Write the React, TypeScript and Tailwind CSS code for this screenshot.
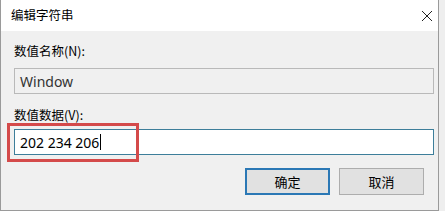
const font = "font-['Microsoft_YaHei','Noto_Sans_CJK_SC',sans-serif]";

export default function App() {
  return (
    <div className={`flex h-[211px] w-[445px] bg-white text-[12px] text-[#000] ${font}`}>
      <div className="flex w-[439px] flex-col border-x border-b border-[#9a9a9a] bg-[#f0f0f0]">
        <div className="flex h-[31px] items-center justify-between bg-white pl-[10px] pr-[5px]">
          <span className="text-[12.5px]">编辑字符串</span>
          <svg width="12" height="12" viewBox="0 0 12 12">
            <path d="M1 1L11 11M11 1L1 11" stroke="#222" strokeWidth="1" />
          </svg>
        </div>

        <div className="flex flex-col px-[13px] pt-[11px]">
          <div className="text-[12.5px] leading-[18px]">数值名称(N):</div>
          <div className="mt-[8px] flex h-[26px] w-[420px] items-center border border-[#b9b9b9] bg-[#f0f0f0] px-[5px] font-['Segoe_UI','Noto_Sans',sans-serif] text-[14px] text-[#333]">
            Window
          </div>

          <div className="mt-[12px] text-[12.5px] leading-[18px]">数值数据(V):</div>
          <div className="relative mt-[5px]">
            <div className="flex h-[26px] w-[420px] items-center border border-[#3d7e9a] bg-white px-[5px] font-['Segoe_UI','Noto_Sans',sans-serif] text-[14px]">
              202 234 206
              <span className="ml-[1px] h-[16px] w-[1px] bg-black" />
            </div>
            <div className="absolute left-[-7px] top-[-6px] h-[39px] w-[132px] border-[3px] border-[#d44a4a]" />
          </div>

          <div className="mt-[13px] flex justify-end gap-[9px]">
            <button className="flex h-[27px] w-[85px] items-center justify-center border-2 border-[#2b78b5] bg-[#e1e1e1] text-[13px]">
              确定
            </button>
            <button className="mr-[1px] flex h-[27px] w-[85px] items-center justify-center border border-[#adadad] bg-[#e1e1e1] text-[13px]">
              取消
            </button>
          </div>
        </div>
      </div>
      <div className="flex-1 bg-[#eeeeee]" />
    </div>
  );
}
